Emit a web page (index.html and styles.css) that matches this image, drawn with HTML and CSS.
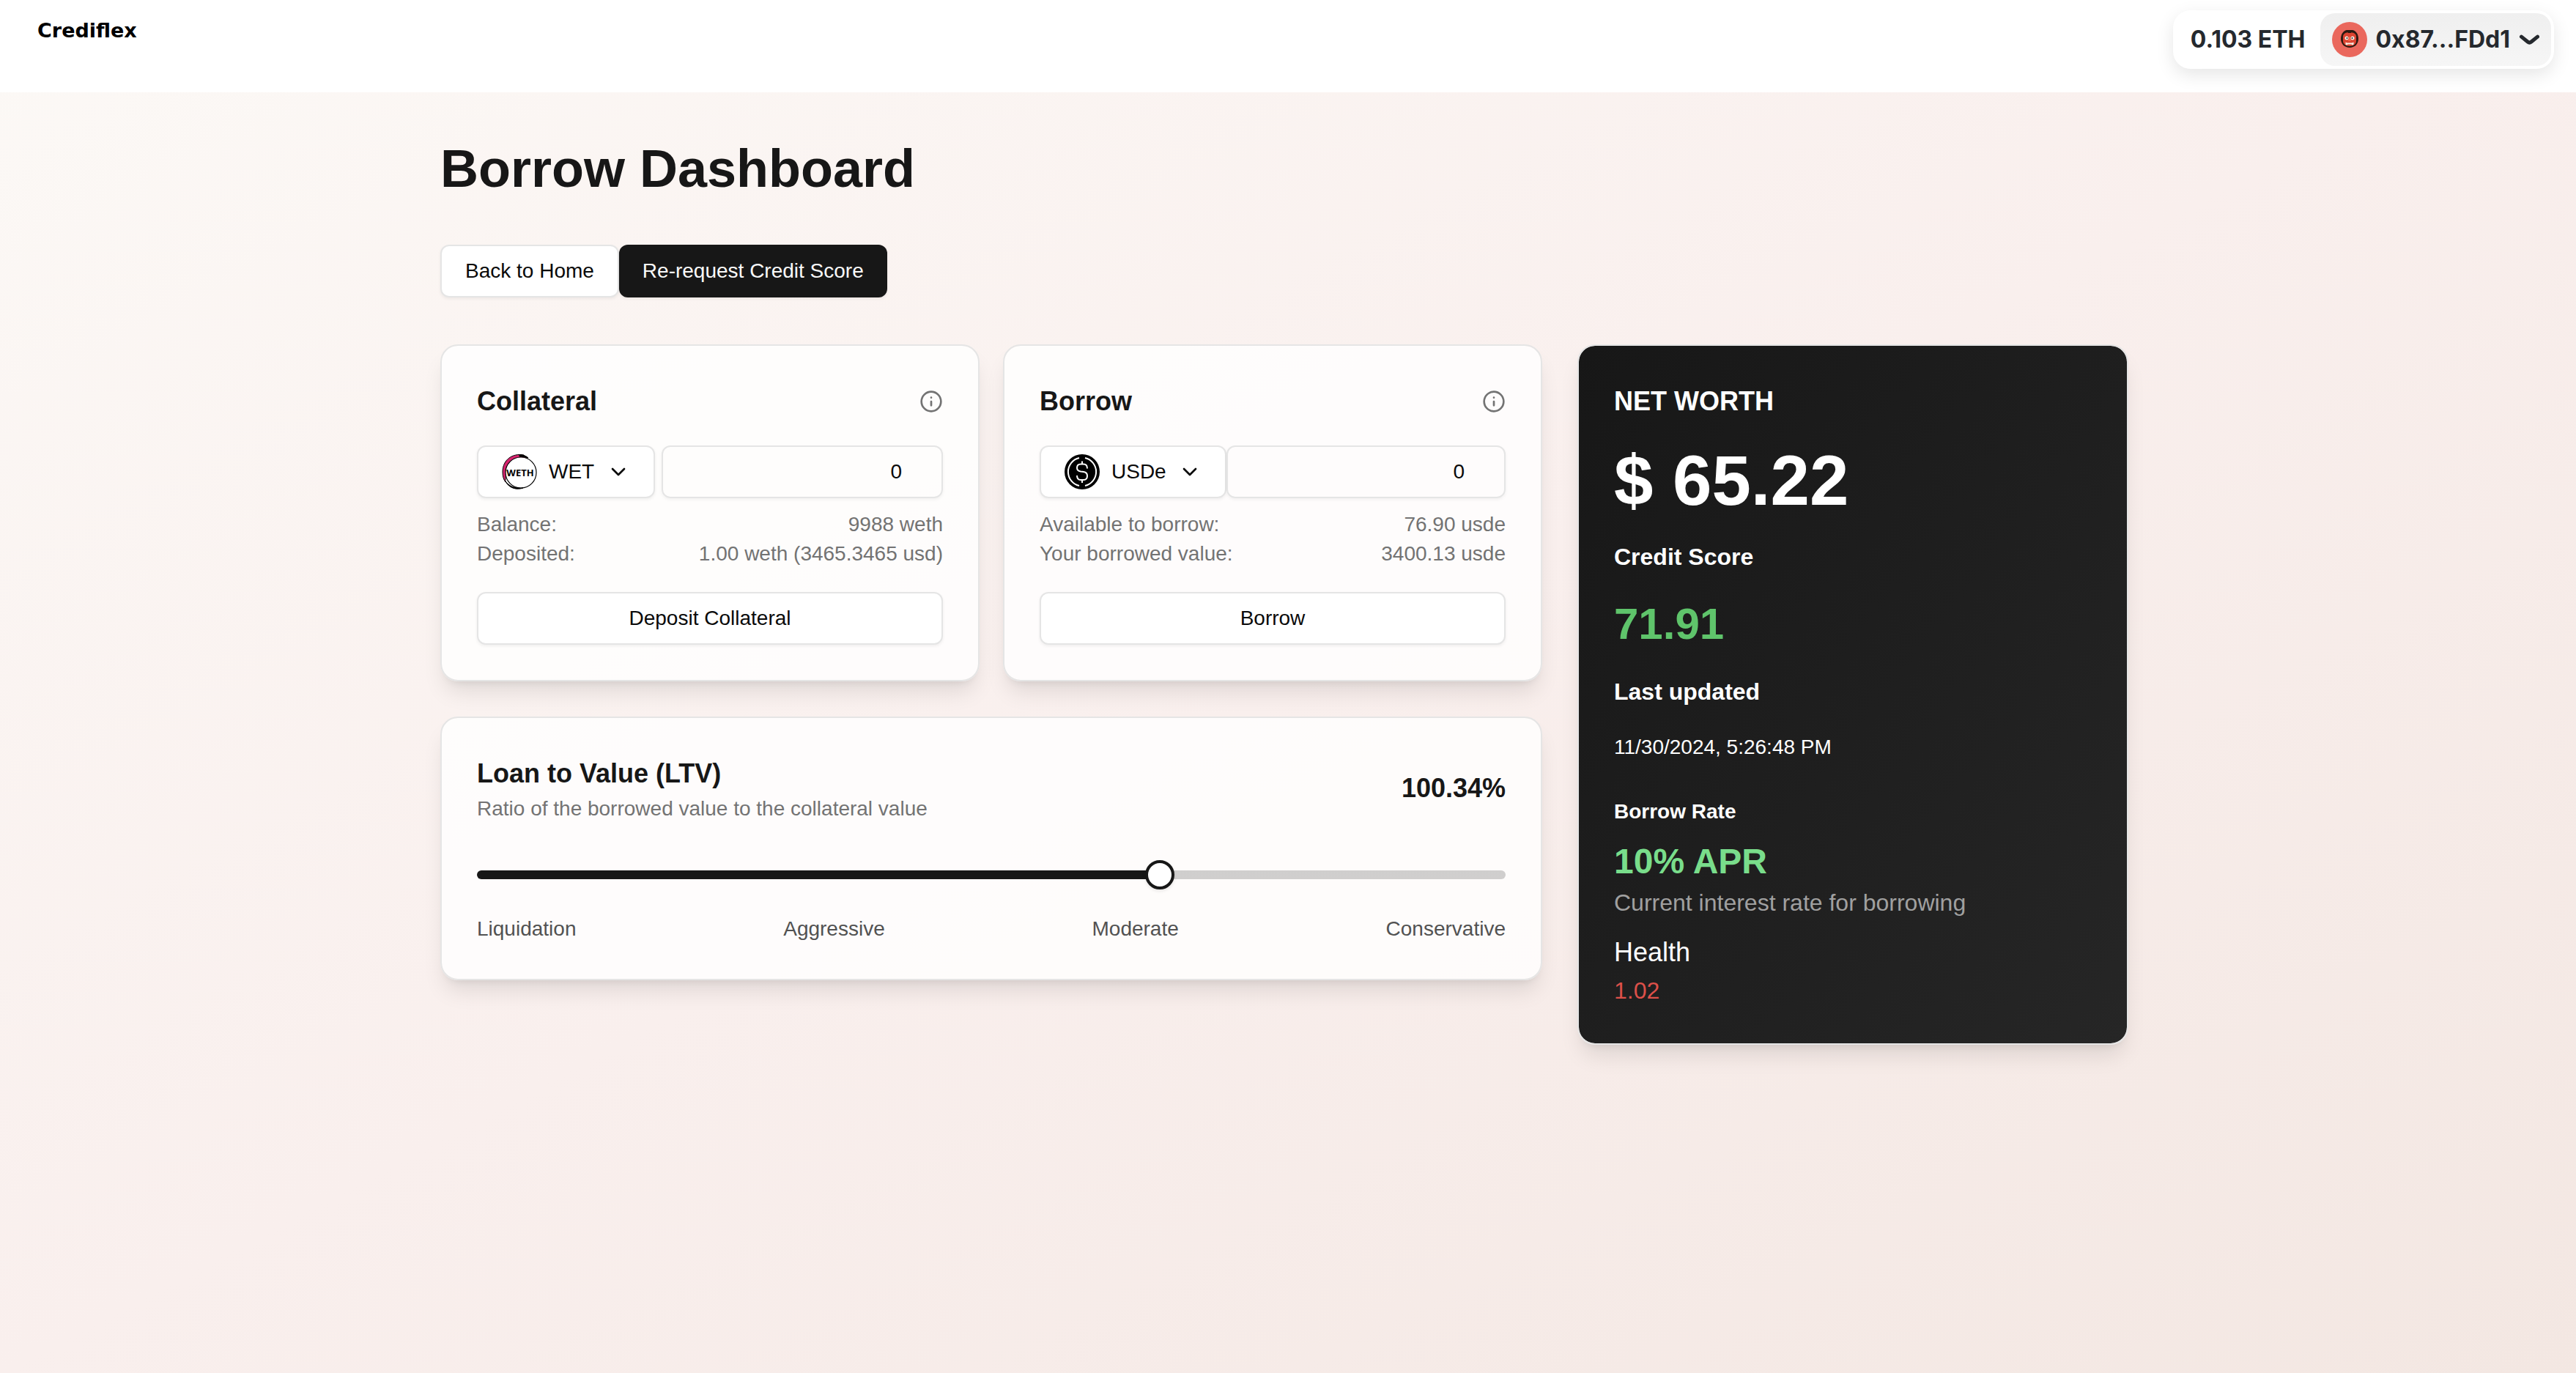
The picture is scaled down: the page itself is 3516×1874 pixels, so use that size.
FILE: index.html
```html
<!DOCTYPE html>
<html lang="en">
<head>
<meta charset="utf-8">
<meta name="viewport" content="width=device-width, initial-scale=1">
<title>Crediflex</title>
<link rel="stylesheet" href="styles.css">
</head>
<body>
<header class="site-header">
  <a class="brand" href="#">Crediflex</a>
  <div class="wallet">
    <span class="wallet-balance">0.103 ETH</span>
    <button class="wallet-account" type="button">
      <svg class="avatar" viewBox="0 0 48 48" aria-hidden="true">
        <circle cx="24" cy="24" r="24" fill="#ea685d"/>
        <path d="M20 11h8c5 1 8 6 8 12 0 7-5 12-12 12s-12-5-12-12c0-6 3-11 8-12z" fill="#2c1a12"/>
        <path d="M15 20c0-4 4-6 9-6s9 2 9 6v6c0 4-4 7-9 7s-9-3-9-7z" fill="#dc4431"/>
        <path d="M20 11l2 4h4l2-4-2 1h-4z" fill="#2c1a12"/>
        <path d="M23 20h2l1 6h-4z" fill="#f0644c"/>
        <circle cx="20" cy="22" r="2.500" fill="#f4efe6"/>
        <circle cx="28" cy="22" r="2.500" fill="#f4efe6"/>
        <circle cx="20.500" cy="22" r="1" fill="#222"/>
        <circle cx="27.500" cy="22" r="1" fill="#222"/>
        <path d="M18.500 27.500l2 1h7l2-1v3.500l-2 .5-1-1h-5l-1 1-2-.5z" fill="#f4efe6"/>
      </svg>
      <span>0x87...FDd1</span>
      <svg class="wallet-chevron" viewBox="0 0 14 7" fill="none" stroke="currentColor" stroke-width="2.5" stroke-linecap="round" stroke-linejoin="round" aria-hidden="true"><path d="M12.750 1.540 8.516 5.004c-.736.603-1.796.603-2.532 0L1.750 1.540"/></svg>
    </button>
  </div>
</header>

<main class="page">
  <h1 class="page-title">Borrow Dashboard</h1>
  <div class="actions">
    <button class="button" type="button">Back to Home</button>
    <button class="button button-dark" type="button">Re-request Credit Score</button>
  </div>

  <div class="dashboard">
    <div class="positions">
      <section class="card">
        <div class="card-header">
          <h2 class="card-title">Collateral</h2>
          <svg class="icon info" viewBox="0 0 24 24" aria-hidden="true"><circle cx="12" cy="12" r="10"/><path d="M12 16v-4M12 8h.01"/></svg>
        </div>
        <div class="amount-row">
          <label class="token">
            <svg class="token-logo" viewBox="0 0 48 48" aria-hidden="true">
              <path d="M30 1C14-2 1 8 1 24c0 6 1 10 4 14C4 24 12 8 34 5z" fill="#d6246e" stroke="#000" stroke-width="1"/>
              <circle cx="26" cy="25" r="21" fill="#fff" stroke="#000" stroke-width="1.200"/>
              <path d="M24 1c5 0 9 1 12 4-4-1-8-2-12-2zM5 37c6 8 15 10 24 9-8 3-19 1-24-9z" fill="#000" stroke="#000"/>
              <text class="token-logo-text" x="25" y="30" text-anchor="middle">WETH</text>
            </svg>
            <select class="token-select" aria-label="Collateral token"><option>WET</option></select>
            <svg class="icon" viewBox="0 0 24 24" aria-hidden="true"><path d="m6 9 6 6 6-6"/></svg>
          </label>
          <input class="amount" type="text" inputmode="decimal" value="0" aria-label="Collateral amount">
        </div>
        <dl class="facts">
          <dt>Balance:</dt><dd>9988 weth</dd>
          <dt>Deposited:</dt><dd>1.00 weth (3465.3465 usd)</dd>
        </dl>
        <button class="button button-wide" type="button">Deposit Collateral</button>
      </section>

      <section class="card">
        <div class="card-header">
          <h2 class="card-title">Borrow</h2>
          <svg class="icon info" viewBox="0 0 24 24" aria-hidden="true"><circle cx="12" cy="12" r="10"/><path d="M12 16v-4M12 8h.01"/></svg>
        </div>
        <div class="amount-row">
          <label class="token">
            <svg class="token-logo" viewBox="0 0 48 48" aria-hidden="true">
              <circle cx="24" cy="24" r="24" fill="#000"/>
              <g fill="none" stroke="#fff" stroke-width="2">
                <path d="M20 5a19.500 19.500 0 0 0 0 38M28 5a19.500 19.500 0 0 1 0 38"/>
                <path d="M31 19.500c0-4-2-6-5-6h-4c-3 0-5 2-5 5s2 4.500 5 5l4 .5c3 .5 5 2 5 5.500s-2 5.500-5 5.500h-4c-3 0-5-2-5-6M24 9.500v4M24 35v4"/>
              </g>
            </svg>
            <select class="token-select" aria-label="Borrow token"><option>USDe</option></select>
            <svg class="icon" viewBox="0 0 24 24" aria-hidden="true"><path d="m6 9 6 6 6-6"/></svg>
          </label>
          <input class="amount" type="text" inputmode="decimal" value="0" aria-label="Borrow amount">
        </div>
        <dl class="facts">
          <dt>Available to borrow:</dt><dd>76.90 usde</dd>
          <dt>Your borrowed value:</dt><dd>3400.13 usde</dd>
        </dl>
        <button class="button button-wide" type="button">Borrow</button>
      </section>

      <section class="card card-ltv">
        <div class="ltv-header">
          <div>
            <h2 class="card-title" id="ltv-title">Loan to Value (LTV)</h2>
            <p class="ltv-note">Ratio of the borrowed value to the collateral value</p>
          </div>
          <output class="ltv-value">100.34%</output>
        </div>
        <input class="slider" type="range" min="0" max="150" step="0.01" value="100.34" aria-labelledby="ltv-title" style="--fill: 66.4%">
        <div class="scale">
          <span>Liquidation</span><span>Aggressive</span><span>Moderate</span><span>Conservative</span>
        </div>
      </section>
    </div>

    <aside class="card summary">
      <h2 class="summary-title">NET WORTH</h2>
      <p class="net-worth">$ 65.22</p>
      <h3 class="summary-label">Credit Score</h3>
      <p class="score">71.91</p>
      <h3 class="summary-label">Last updated</h3>
      <p class="updated">11/30/2024, 5:26:48 PM</p>
      <div class="rates">
        <div>
          <h3 class="rate-label">Borrow Rate</h3>
          <p class="rate">10% APR</p>
          <p class="rate-note">Current interest rate for borrowing</p>
        </div>
        <div>
          <h3 class="health-label">Health</h3>
          <p class="health">1.02</p>
        </div>
      </div>
    </aside>
  </div>
</main>
</body>
</html>
```
FILE: styles.css
```css
* {
  box-sizing: border-box;
}

body {
  margin: 0;
  min-height: 100vh;
  background: linear-gradient(to bottom right, #fcf9f6, #f9efed 50%, #f3e7e2);
  color: #171717;
  font: 28px/40px "Liberation Sans", Arial, sans-serif;
}

h1, h2, h3, p, dl, dd {
  margin: 0;
}

button, input, select {
  font: inherit;
  color: inherit;
}

.site-header {
  display: flex;
  justify-content: space-between;
  align-items: flex-start;
  height: 126px;
  padding: 14px 30px 0 51px;
  background: #fff;
}

.brand {
  padding-top: 12px;
  color: #000;
  font: bold 27px/32px "DejaVu Sans", sans-serif;
  text-decoration: none;
}

.wallet {
  display: flex;
  align-items: center;
  padding: 4px;
  border-radius: 24px;
  background: #fff;
  box-shadow: 0 8px 24px rgba(0, 0, 0, 0.1);
  color: #25292e;
  font: bold 32px/40px Inter, sans-serif;
}

.wallet-balance {
  padding: 0 20px;
}

.wallet-account {
  display: flex;
  align-items: center;
  gap: 12px;
  height: 72px;
  padding: 0 16px;
  border: 0;
  border-radius: 20px;
  background: linear-gradient(#efefef, #f6f6f6);
}

.avatar {
  width: 48px;
  height: 48px;
}

.wallet-chevron {
  width: 28px;
  height: 14px;
}

.page {
  max-width: 2378px;
  margin: 0 auto;
  padding: 64px 42px 64px 32px;
}

.page-title {
  font-size: 72px;
  line-height: 80px;
}

.actions {
  display: flex;
  margin: 64px 0;
}

.button {
  height: 72px;
  padding: 0 32px;
  border: 2px solid #e5e5e5;
  border-radius: 12px;
  background: #fff;
  box-shadow: 0 2px 4px rgba(0, 0, 0, 0.06);
  color: #0a0a0a;
}

.button-dark {
  border: 0;
  background: #171717;
  color: #fafafa;
}

.button-wide {
  width: 100%;
}

.dashboard {
  display: grid;
  grid-template-columns: minmax(0, 2fr) minmax(0, 1fr);
  align-items: start;
  gap: 48px;
}

.positions {
  display: grid;
  grid-template-columns: repeat(2, minmax(0, 1fr));
  gap: 48px 32px;
}

.card {
  padding: 48px;
  border: 2px solid #e5e5e5;
  border-radius: 24px;
  background: rgba(255, 255, 255, 0.8);
  background-clip: padding-box;
  box-shadow: 0 20px 30px -6px rgba(0, 0, 0, 0.1), 0 8px 12px -8px rgba(0, 0, 0, 0.1);
}

.card-ltv {
  grid-column: 1 / -1;
}

.card-header,
.ltv-header,
.scale {
  display: flex;
  justify-content: space-between;
  align-items: center;
}

.card-title {
  font-size: 36px;
  line-height: 56px;
}

.icon {
  flex: none;
  width: 32px;
  height: 32px;
  fill: none;
  stroke: currentColor;
  stroke-width: 2;
  stroke-linecap: round;
  stroke-linejoin: round;
}

.info {
  color: #737373;
}

.amount-row {
  display: flex;
  justify-content: space-between;
  margin: 32px 0 16px;
}

.token {
  display: flex;
  flex: none;
  align-items: center;
  gap: 16px;
  height: 72px;
  padding: 0 32px;
  border: 2px solid #e5e5e5;
  border-radius: 12px;
  background: #fff;
  box-shadow: 0 2px 4px rgba(0, 0, 0, 0.06);
  color: #0a0a0a;
}

.token-logo {
  width: 48px;
  height: 48px;
}

.token-logo-text {
  font: bold 13px "Open Sans", sans-serif;
}

.token-select {
  padding: 0;
  border: 0;
  background: none;
  appearance: none;
}

.amount {
  width: 384px;
  min-width: 0;
  height: 72px;
  padding: 0 54px 0 24px;
  border: 2px solid #e5e5e5;
  border-radius: 12px;
  background: transparent;
  box-shadow: 0 2px 4px rgba(0, 0, 0, 0.05);
  color: #0a0a0a;
  text-align: right;
}

.facts {
  display: grid;
  grid-template-columns: auto auto;
  justify-content: space-between;
  margin-bottom: 32px;
  color: #737373;
}

.facts dd {
  text-align: right;
}

.ltv-note {
  color: #737373;
}

.ltv-value {
  font-size: 36px;
  font-weight: bold;
  line-height: 56px;
}

.slider {
  display: block;
  width: 100%;
  height: 44px;
  margin: 48px 0 32px;
  background: none;
  appearance: none;
}

.slider::-webkit-slider-runnable-track {
  height: 12px;
  border-radius: 6px;
  background: linear-gradient(to right, #171717 var(--fill), rgba(23, 23, 23, 0.2) var(--fill));
}

.slider::-webkit-slider-thumb {
  width: 40px;
  height: 40px;
  margin-top: -14px;
  border: 4px solid #171717;
  border-radius: 50%;
  background: #fff;
  box-shadow: 0 2px 4px rgba(0, 0, 0, 0.1);
  appearance: none;
}

.scale {
  color: #525252;
}

.summary {
  background: linear-gradient(to bottom right, #171717, #262626) padding-box;
  color: #fff;
}

.summary-title {
  font-size: 36px;
  line-height: 56px;
}

.net-worth {
  margin: 32px 0;
  font-size: 96px;
  font-weight: bold;
  line-height: 96px;
}

.summary-label {
  font-size: 32px;
  line-height: 48px;
}

.score {
  margin: 32px 0;
  color: #5fc46b;
  font-size: 60px;
  font-weight: bold;
  line-height: 72px;
}

.updated {
  margin: 32px 0 48px;
}

.rates {
  display: grid;
  gap: 16px;
}

.rate-label {
  margin-bottom: 16px;
  font-size: 28px;
  line-height: 40px;
}

.rate {
  color: #79dd8b;
  font-size: 48px;
  font-weight: bold;
  line-height: 64px;
}

.rate-note {
  color: #a0a0a0;
  font-size: 32px;
  line-height: 48px;
}

.health-label {
  font-size: 36px;
  font-weight: normal;
  line-height: 56px;
}

.health {
  color: #dc5049;
  font-size: 32px;
  line-height: 48px;
}
```
